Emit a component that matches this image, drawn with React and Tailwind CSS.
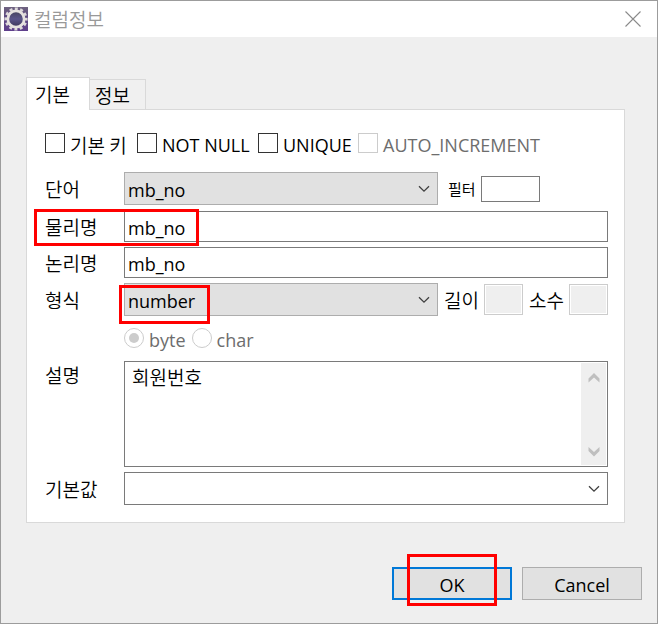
const korean = "font-['Noto_Sans_CJK_KR',sans-serif] font-[350] text-[19px] leading-7";
const latin = "font-['Open_Sans','Noto_Sans_CJK_KR',sans-serif] text-[18px] leading-6";
const field = "border border-[#7a7a7a] bg-white px-[3px] outline-none";

function Mark({ className }) {
  return <span aria-hidden="true" className={`pointer-events-none absolute z-10 border-[3px] border-[#ff0000] ${className}`} />;
}

function Chevron({ className }) {
  return (
    <svg className={`pointer-events-none ${className}`} width="12" height="8" viewBox="0 0 12 8" fill="none" stroke="#404040" strokeWidth="1.3" aria-hidden="true">
      <path d="M1 1.2 6 6.2 11 1.2" />
    </svg>
  );
}

function ScrollArrow({ down }) {
  return (
    <svg width="12" height="10" viewBox="0 0 12 10" fill="#bfbfbf" aria-hidden="true">
      <path d={down ? "M0.5 0 6 5 11.5 0V4L6 9.5 0.5 4Z" : "M0.5 9.5 6 4.5 11.5 9.5V5.5L6 0 0.5 5.5Z"} />
    </svg>
  );
}

function Check({ id, label, disabled, className, font = latin }) {
  return (
    <div className={`flex items-center gap-[5px] ${className}`}>
      <input
        id={id}
        type="checkbox"
        disabled={disabled}
        className="size-5 shrink-0 appearance-none border border-[#333] bg-white disabled:border-[#ccc]"
      />
      <label htmlFor={id} className={`whitespace-nowrap pt-1 ${font} ${disabled ? "text-[#6d6d6d]" : ""}`}>{label}</label>
    </div>
  );
}

function Radio({ id, label, checked }) {
  return (
    <div className="flex items-center gap-[5px]">
      <input
        id={id}
        type="radio"
        name="unit"
        disabled
        defaultChecked={checked}
        className="flex size-5 shrink-0 appearance-none items-center justify-center rounded-full border border-[#ccc] before:size-[10px] before:rounded-full checked:before:bg-[#ccc]"
      />
      <label htmlFor={id} className={`pt-1 text-[#6d6d6d] ${latin}`}>{label}</label>
    </div>
  );
}

function Combo({ id, value, plain }) {
  return (
    <div className="relative min-w-0 flex-1">
      <select
        id={id}
        defaultValue={value}
        className={`block h-[33px] w-full appearance-none border px-[3px] pt-[2px] outline-none ${latin} ${plain ? "border-[#7a7a7a] bg-white" : "border-[#adadad] bg-[#e1e1e1]"}`}
      >
        <option value={value}>{value}</option>
      </select>
      <Chevron className="absolute right-2 top-[13px]" />
    </div>
  );
}

function Row({ id, label, className = "", children }) {
  return (
    <div className={`relative flex items-center ${className}`}>
      <label htmlFor={id} className={`w-[79px] shrink-0 ${korean}`}>{label}</label>
      {children}
    </div>
  );
}

function AppIcon() {
  return (
    <svg width="24" height="24" viewBox="0 0 24 24" aria-hidden="true">
      <defs>
        <linearGradient id="tile" x1="0" y1="0" x2="0" y2="1">
          <stop offset="0" stopColor="#6f6380" />
          <stop offset="0.4" stopColor="#5d4a80" />
          <stop offset="1" stopColor="#5f3f8c" />
        </linearGradient>
        <linearGradient id="core" x1="0" y1="0" x2="0" y2="1">
          <stop offset="0" stopColor="#45425a" />
          <stop offset="0.5" stopColor="#5a548a" />
          <stop offset="1" stopColor="#3a3456" />
        </linearGradient>
      </defs>
      <rect width="24" height="24" fill="url(#tile)" />
      <circle cx="12" cy="12" r="10.3" fill="none" stroke="#dcd8da" strokeWidth="2.6" strokeDasharray="3 2.393" strokeDashoffset="1.5" />
      <circle cx="12" cy="12" r="8.2" fill="url(#core)" stroke="#e6e2e0" strokeWidth="2.8" />
    </svg>
  );
}

export default function App() {
  return (
    <div className="flex min-h-screen flex-col border border-[#9c9c9c] bg-[#efefef] text-black">
      <header className="flex h-9 items-center bg-white pl-[3px] pr-4">
        <AppIcon />
        <h1 className={`ml-[6px] flex-1 text-[#999] ${korean}`}>컬럼정보</h1>
        <button type="button" aria-label="닫기" className="block">
          <svg width="16" height="16" viewBox="0 0 16 16" stroke="#8a8a8a" strokeWidth="1.1" aria-hidden="true">
            <path d="M0.5 0.5 15.5 15.5M15.5 0.5 0.5 15.5" />
          </svg>
        </button>
      </header>

      <main className="flex flex-1 flex-col px-[25px] pt-10">
        <div role="tablist" className="flex items-end">
          <button type="button" role="tab" aria-selected="true" className={`relative -mb-px h-[33px] w-16 border border-b-0 border-[#d9d9d9] bg-white pl-2 text-left ${korean}`}>기본</button>
          <button type="button" role="tab" aria-selected="false" className={`h-[30px] w-14 border border-b-0 border-l-0 border-[#d9d9d9] bg-[#f0f0f0] pl-[5px] text-left ${korean}`}>정보</button>
        </div>

        <section className="mr-[7px] border border-[#d9d9d9] bg-white pb-[17px] pl-[18px] pr-4 pt-[17px]">
          <div className="flex h-8 items-center">
            <Check id="pk" label="기본 키" font={korean} className="w-[92px]" />
            <Check id="nn" label="NOT NULL" className="w-[121px]" />
            <Check id="uq" label="UNIQUE" className="w-[100px]" />
            <Check id="ai" label="AUTO_INCREMENT" disabled />
          </div>

          <Row id="word" label="단어" className="mt-[13px]">
            <Combo id="word" value="mb_no" />
            <label htmlFor="filter" className="ml-[10px] w-[33px] font-['Noto_Sans_CJK_KR',sans-serif] text-[15px] leading-6">필터</label>
            <input id="filter" className={`mr-[68px] h-[26px] w-[59px] ${field}`} />
          </Row>
          <Row id="physical" label="물리명" className="mt-[6px]">
            <input id="physical" defaultValue="mb_no" className={`h-[31px] min-w-0 flex-1 pt-[2px] ${field} ${latin}`} />
            <Mark className="-left-[11px] -top-[2px] h-[37px] w-[165px]" />
          </Row>
          <Row id="logical" label="논리명" className="mt-[5px]">
            <input id="logical" defaultValue="mb_no" className={`h-[31px] min-w-0 flex-1 pt-[2px] ${field} ${latin}`} />
          </Row>
          <Row id="type" label="형식" className="mt-[5px]">
            <Combo id="type" value="number" />
            <Mark className="left-[74px] top-[2px] h-[39px] w-[91px]" />
            <label htmlFor="length" className={`ml-[6px] w-10 ${korean}`}>길이</label>
            <input id="length" disabled className="h-[31px] w-[39px] border border-[#ccc] bg-[#efefef] shadow-[inset_0_0_0_1px_#fff]" />
            <label htmlFor="decimal" className={`ml-[6px] w-10 ${korean}`}>소수</label>
            <input id="decimal" disabled className="h-[31px] w-[39px] border border-[#ccc] bg-[#efefef] shadow-[inset_0_0_0_1px_#fff]" />
          </Row>

          <div className="ml-[79px] mt-[6px] flex h-8 items-center gap-[6px]">
            <Radio id="byte" label="byte" checked />
            <Radio id="char" label="char" />
          </div>

          <div className="mt-[7px] flex items-start">
            <label htmlFor="description" className={`w-[79px] shrink-0 ${korean}`}>설명</label>
            <div className="flex h-[106px] min-w-0 flex-1 border border-[#7a7a7a] p-px">
              <textarea id="description" defaultValue="회원번호" className={`min-w-0 flex-1 resize-none overflow-hidden bg-white px-[6px] outline-none ${korean}`} />
              <div className="flex w-[25px] flex-col items-center justify-between bg-[#efefef] pb-2 pt-[10px]">
                <ScrollArrow />
                <ScrollArrow down />
              </div>
            </div>
          </div>
          <Row id="default" label="기본값" className="mt-[5px]">
            <Combo id="default" value="" plain />
          </Row>
        </section>

        <footer className="-mr-[10px] mt-11 flex justify-end gap-[10px]">
          <div className="relative">
            <button type="button" className={`h-[33px] w-[120px] border-2 border-[#0078d7] bg-[#e1e1e1] pt-[2px] ${latin}`}>OK</button>
            <Mark className="-top-[13px] left-[15px] h-[52px] w-[90px]" />
          </div>
          <button type="button" className={`h-[33px] w-[120px] border border-[#adadad] bg-[#e1e1e1] pt-[2px] ${latin}`}>Cancel</button>
        </footer>
      </main>
    </div>
  );
}
